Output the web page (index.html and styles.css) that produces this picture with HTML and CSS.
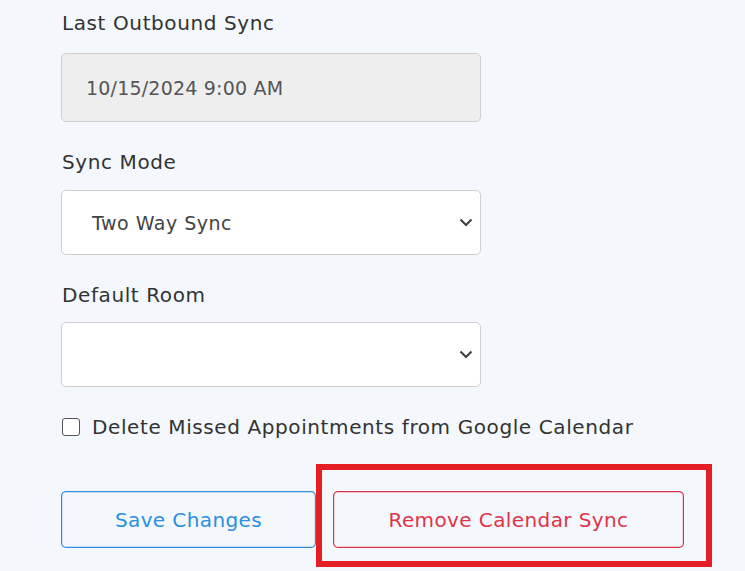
FILE: index.html
```html
<!DOCTYPE html>
<html>
<head>
<meta charset="utf-8">
<link rel="stylesheet" href="styles.css">
</head>
<body>
<div class="form">
  <div class="field">
    <label class="lbl">Last Outbound Sync</label>
    <div class="input readonly">10/15/2024 9:00 AM</div>
  </div>
  <div class="field">
    <label class="lbl">Sync Mode</label>
    <div class="input select">
      <span class="sel-text">Two Way Sync</span>
      <svg class="chev" width="14" height="9" viewBox="0 0 14 9"><path d="M1.5 1.5 L7 7 L12.5 1.5" fill="none" stroke="#444" stroke-width="2.2"/></svg>
    </div>
  </div>
  <div class="field">
    <label class="lbl">Default Room</label>
    <div class="input select">
      <span class="sel-text"></span>
      <svg class="chev" width="14" height="9" viewBox="0 0 14 9"><path d="M1.5 1.5 L7 7 L12.5 1.5" fill="none" stroke="#444" stroke-width="2.2"/></svg>
    </div>
  </div>
  <div class="check-row">
    <span class="box"></span>
    <span class="check-text">Delete Missed Appointments from Google Calendar</span>
  </div>
  <div class="buttons">
    <div class="btn save">Save Changes</div>
    <div class="btn remove">Remove Calendar Sync</div>
    <div class="highlight"></div>
  </div>
</div>
</body>
</html>
```

FILE: styles.css
```css
html, body {
  margin: 0;
  padding: 0;
  background: #f4f8fc;
}
body {
  width: 745px;
  height: 571px;
  overflow: hidden;
  font-family: "DejaVu Sans", sans-serif;
  color: #333;
}
.form {
  padding: 11px 0 0 61px;
}
.field {
  display: flex;
  flex-direction: column;
  width: 420px;
}
.lbl {
  font-size: 20px;
  letter-spacing: 0.6px;
  line-height: 24px;
  color: #333;
  padding-left: 1px;
  margin-bottom: 18px;
}
.field + .field {
  margin-top: 28px;
}
.field + .field .lbl {
  margin-bottom: 16px;
}
.field + .field + .field .lbl {
  margin-bottom: 15px;
}
.input {
  box-sizing: border-box;
  width: 420px;
  height: 69px;
  border: 1px solid #cfcfcf;
  border-radius: 5px;
  background: #fff;
  display: flex;
  align-items: center;
  font-size: 19px;
  letter-spacing: 0.2px;
  color: #555;
}
.readonly {
  background: #eeeeee;
  padding-left: 24px;
}
.select {
  height: 65px;
  padding-left: 30px;
  padding-right: 7px;
  justify-content: space-between;
  color: #444;
  letter-spacing: 0.5px;
}
.chev {
  display: block;
}
.check-row {
  margin-top: 28px;
  display: flex;
  align-items: center;
  gap: 12px;
  padding-left: 1px;
}
.box {
  box-sizing: border-box;
  width: 18px;
  height: 18px;
  border: 1.5px solid #555;
  border-radius: 3px;
  background: #fff;
  flex-shrink: 0;
}
.check-text {
  font-size: 20px;
  letter-spacing: 0.6px;
  line-height: 24px;
  color: #333;
  white-space: nowrap;
}
.buttons {
  position: relative;
  margin-top: 52px;
  display: flex;
  gap: 17px;
}
.btn {
  box-sizing: border-box;
  height: 57px;
  border-radius: 5px;
  display: flex;
  align-items: center;
  justify-content: center;
  font-size: 20px;
  letter-spacing: 0.4px;
  flex-shrink: 0;
  white-space: nowrap;
}
.save {
  width: 255px;
  box-shadow: inset 0 0 0 1.2px #2f8ee0;
  color: #2a8fe0;
}
.remove {
  width: 351px;
  box-shadow: inset 0 0 0 1.2px #d8344a;
  color: #e0334a;
}
.highlight {
  position: absolute;
  left: 255px;
  top: -27px;
  width: 396px;
  height: 103px;
  box-sizing: border-box;
  border: 6px solid #e31e24;
}
```
